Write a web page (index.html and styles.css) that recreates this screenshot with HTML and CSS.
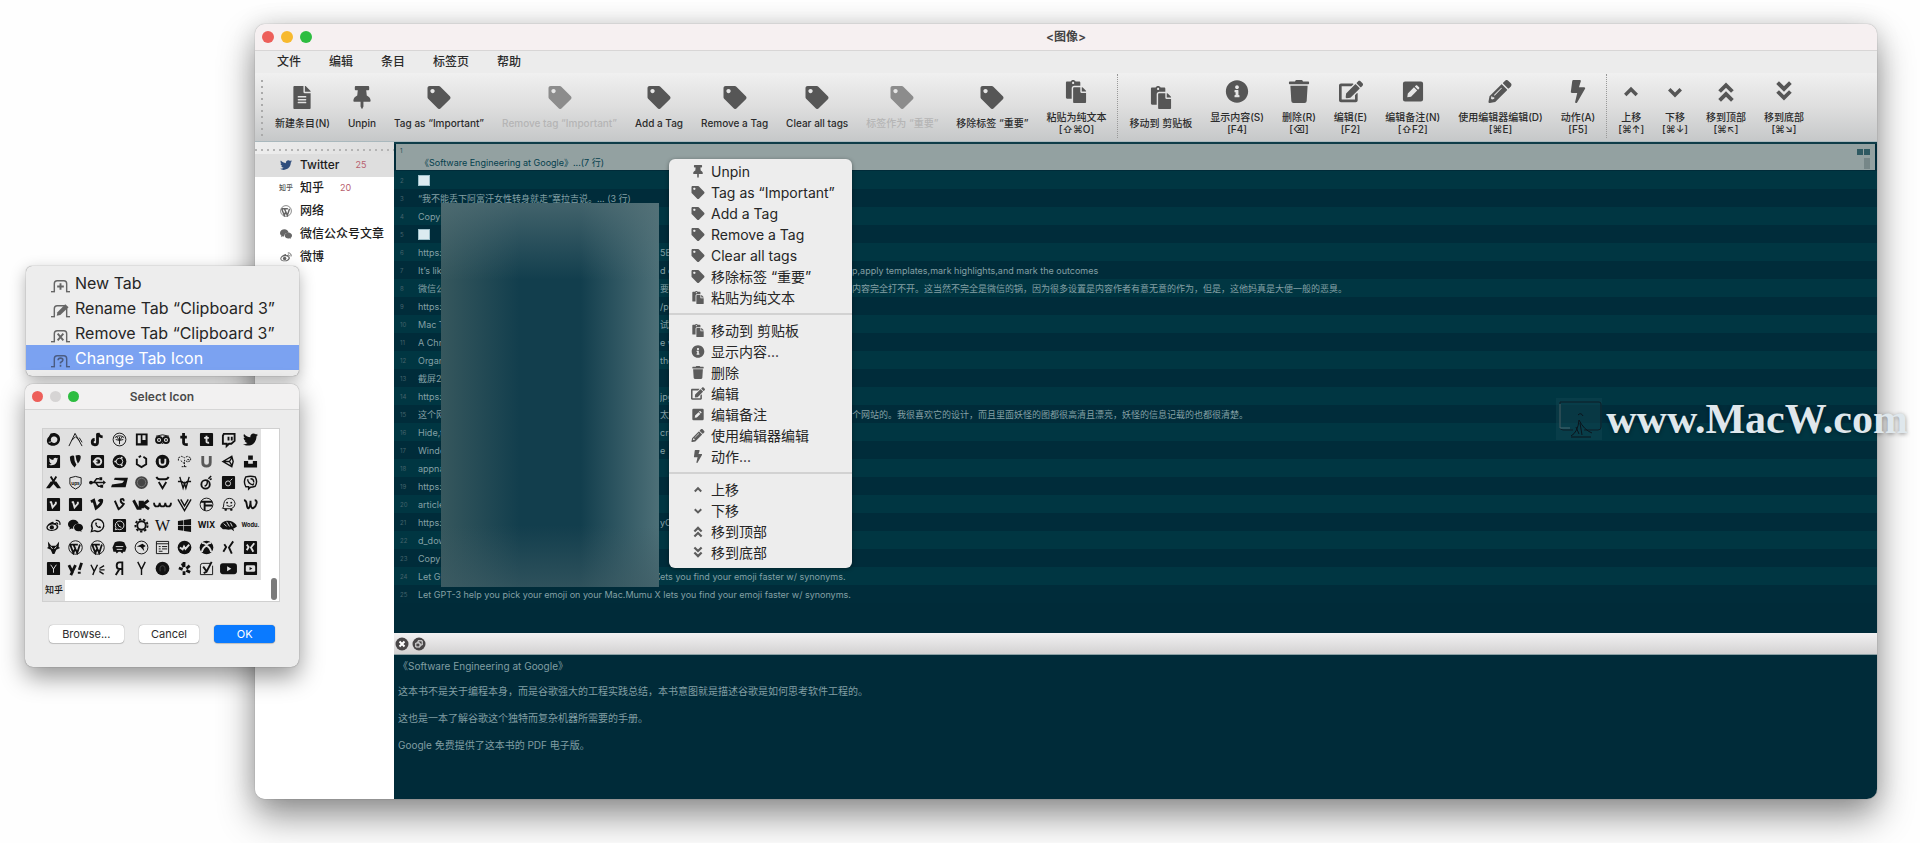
FILE: index.html
```html
<!DOCTYPE html>
<html lang="zh-CN">
<head>
<meta charset="utf-8">
<title>图像</title>
<link rel="stylesheet" href="styles.css">
</head>
<body>
<svg class="defs" aria-hidden="true">
  <symbol id="file" viewBox="0 0 384 512"><path d="M224 136V0H24C10.7 0 0 10.7 0 24v464c0 13.3 10.7 24 24 24h336c13.3 0 24-10.7 24-24V160H248c-13.2 0-24-10.8-24-24zm64 236c0 6.600-5.400 12-12 12H108c-6.600 0-12-5.400-12-12v-8c0-6.600 5.400-12 12-12h168c6.600 0 12 5.400 12 12v8zm0-64c0 6.600-5.400 12-12 12H108c-6.600 0-12-5.400-12-12v-8c0-6.600 5.400-12 12-12h168c6.600 0 12 5.400 12 12v8zm0-72v8c0 6.600-5.400 12-12 12H108c-6.600 0-12-5.400-12-12v-8c0-6.600 5.400-12 12-12h168c6.600 0 12 5.400 12 12zm96-114.100v6.100H256V0h6.100c6.400 0 12.500 2.500 17 7l97.900 98c4.500 4.500 7 10.600 7 16.900z"/></symbol>
  <symbol id="pin" viewBox="0 0 384 512"><path d="M298 214L286 96H328c13 0 24-11 24-24V24c0-13-11-24-24-24H56C43 0 32 11 32 24v48c0 13 11 24 24 24h42L86 214C37 237 0 277 0 328c0 13 11 24 24 24h136v104l25 52c3 6 11 6 14 0l25-52V352h136c13 0 24-11 24-24 0-51-38-91-86-114z"/></symbol>
  <symbol id="tag" viewBox="0 0 512 512"><path d="M0 252V48C0 21 21 0 48 0h204a48 48 0 0 1 34 14l212 212c19 19 19 49 0 68L294 498c-19 19-49 19-68 0L14 286A48 48 0 0 1 0 252zM112 64c-27 0-48 21-48 48s21 48 48 48 48-21 48-48-21-48-48-48z"/></symbol>
  <symbol id="paste" viewBox="0 0 448 512"><path d="M128 184c0-31 25-56 56-56h136V56c0-13-11-24-24-24h-81C204 13 184 0 160 0s-44 13-55 32H24C11 32 0 43 0 56v336c0 13 11 24 24 24h104V184zm32-144c13 0 24 11 24 24s-11 24-24 24-24-11-24-24 11-24 24-24zm184 248h104v200c0 13-11 24-24 24H184c-13 0-24-11-24-24V184c0-13 11-24 24-24h136v104c0 13 11 24 24 24zm104-38v6h-96v-96h6a24 24 0 0 1 17 7l66 66a24 24 0 0 1 7 17z"/></symbol>
  <symbol id="info" viewBox="0 0 512 512"><path d="M256 8C119 8 8 119 8 256c0 137 111 248 248 248s248-111 248-248C504 119 393 8 256 8zm0 110c23 0 42 19 42 42s-19 42-42 42-42-19-42-42 19-42 42-42zm56 254c0 7-5 12-12 12h-88c-7 0-12-5-12-12v-24c0-7 5-12 12-12h12v-64h-12c-7 0-12-5-12-12v-24c0-7 5-12 12-12h64c7 0 12 5 12 12v100h12c7 0 12 5 12 12v24z"/></symbol>
  <symbol id="trash" viewBox="0 0 448 512"><path d="M432 32H312l-9-19A24 24 0 0 0 281 0H167a24 24 0 0 0-22 13L136 32H16A16 16 0 0 0 0 48v32a16 16 0 0 0 16 16h416a16 16 0 0 0 16-16V48a16 16 0 0 0-16-16zM53 467a48 48 0 0 0 48 45h246a48 48 0 0 0 48-45L416 128H32z"/></symbol>
  <symbol id="edit" viewBox="0 0 576 512"><path d="M403 83l90 90c4 4 4 10 0 14L274 406l-92 10c-13 1-23-9-22-22l10-92L389 83c4-4 10-4 14 0zm162-23l-49-49c-15-15-40-15-55 0l-36 36c-4 4-4 10 0 14l90 90c4 4 10 4 14 0l36-36c15-15 15-40 0-55zM384 346V448H64V128h230c3 0 6-1 8-3l40-40c8-8 3-21-8-21H48C22 64 0 86 0 112v352c0 27 22 48 48 48h352c27 0 48-21 48-48V306c0-11-13-16-21-8l-40 40c-2 2-3 5-3 8z"/></symbol>
  <symbol id="note" viewBox="0 0 448 512"><path fill-rule="evenodd" d="M48 32h352a48 48 0 0 1 48 48v352a48 48 0 0 1-48 48H48a48 48 0 0 1-48-48V80a48 48 0 0 1 48-48zM246 163L109 300l-13 84 84-13 137-137zM265 144l71 71 23-23c9-9 9-20 0-29l-42-42c-9-9-20-9-29 0z"/></symbol>
  <symbol id="pencil" viewBox="0 0 512 512"><path fill-rule="evenodd" d="M498 142l-46 46c-5 5-12 5-17 0L324 77c-5-5-5-12 0-17l46-46c19-19 49-19 68 0l60 60c19 19 19 49 0 68zM284 100L22 362 0 484c-3 16 11 31 28 28l122-22 262-262c5-5 5-12 0-17L301 100c-5-5-12-5-17 0zM284 172l14 14-162 162-14-14zM84 384h44v36l-50 14-24-24 12-46h18z"/></symbol>
  <symbol id="bolt" viewBox="0 0 320 512"><path d="M296 160H181l42-130C227 15 216 0 200 0H56C44 0 34 9 32 21L0 261c-2 14 10 27 24 27h119L97 482c-4 16 8 30 23 30 8 0 16-4 21-12l176-304c9-16-2-36-21-36z"/></symbol>
  <symbol id="up" viewBox="-2 -2 20 20"><path d="M3 11l5-5 5 5" class="chev"/></symbol>
  <symbol id="down" viewBox="-2 -2 20 20"><path d="M3 6l5 5 5-5" class="chev"/></symbol>
  <symbol id="top" viewBox="-1 -1 18 18"><path d="M3 8l5-5 5 5M3 15l5-5 5 5" class="chev"/></symbol>
  <symbol id="bottom" viewBox="-1 -1 18 18"><path d="M3 1l5 5 5-5M3 8l5 5 5-5" class="chev"/></symbol>
  <symbol id="twitter" viewBox="0 0 512 512"><path d="M459 152c1 4 1 9 1 13 0 139-106 299-299 299-59 0-115-17-161-47 8 1 16 1 25 1 49 0 94-16 130-45-46-1-84-31-98-72 7 1 13 1 20 1 10 0 19-1 28-3-48-10-84-52-84-103v-1c14 7 30 12 47 13-28-19-47-51-47-88 0-19 6-37 15-53 51 64 129 105 216 110-2-8-2-16-2-24 0-58 46-105 105-105 30 0 57 13 76 33 24-4 47-13 67-25-8 24-24 45-46 58 21-3 41-8 60-17-14 21-32 40-53 55z"/></symbol>
  <symbol id="weibo" viewBox="0 0 16 16"><path fill-rule="evenodd" d="M6.500 4.200c1.300-.5 2 .2 1.600 1.500 1.700-.7 3.400-.4 3 1.200 3 .9 2.600 4.100-.2 5.700C7.600 14.700.6 14 .4 10.300.3 8 3.700 5 6.500 4.200zM6.500 7c-3.100.2-5 1.900-4.700 3.500.2 1.500 2.400 2.400 4.900 2.200 2.900-.3 4.900-1.900 4.700-3.500C11.200 7.700 9 6.800 6.500 7z"/><circle cx="6.200" cy="10" r="2.300"/><path d="M10.500 5.200c1.400-.3 2.200.6 1.800 1.900M10.400 2.600c2.900-.6 5.200 1.800 4.300 4.700" fill="none" stroke="currentColor" stroke-width="1.300"/></symbol>
  <symbol id="wechat" viewBox="0 0 16 16"><path d="M6 1.800C2.700 1.800 0 4 0 6.700c0 1.500.8 2.800 2 3.700l-.6 1.800 2.200-1.100c.7.200 1.500.3 2 .3-.5-3 2-5.400 5.800-5.200C11 3.600 8.800 1.800 6 1.800z"/><path d="M16 10c0-2.200-2.200-4-4.800-4-2.700 0-4.800 1.800-4.800 4s2.100 4.100 4.800 4.100c.5 0 1.100-.1 1.600-.3l1.700 1-.5-1.500C15.300 12.500 16 11.300 16 10z"/></symbol>
  <symbol id="wp" viewBox="0 0 16 16"><circle cx="8" cy="8" r="7.200" fill="none" stroke="currentColor"/><path d="M2.300 5l3.400 9L8 8M6 5.200l3.800 8.700 2.900-9M2 5h4.200M6 5h4.500" fill="none" stroke="currentColor" stroke-width="1.900"/></symbol>
  <symbol id="sq" viewBox="0 0 16 16"><rect x="1" y="1" width="14" height="14" rx="1"/></symbol>
  <symbol id="tab" viewBox="0 0 20 14"><path d="M0 13h3.500V4.500Q3.500 1.500 6.500 1.500h7q3 0 3 3V13H20" fill="none" stroke="currentColor" stroke-width="1.500"/></symbol>
</svg>

<main class="window">
  <header class="titlebar">
    <div class="lights"><i class="red"></i><i class="yellow"></i><i class="green"></i></div>
    <h1>&lt;图像&gt;</h1>
  </header>
  <nav class="menubar"><button>文件</button><button>编辑</button><button>条目</button><button>标签页</button><button>帮助</button></nav>
  <div class="toolbar">
    <i class="grip"></i>
    <button><svg><use href="#file"/></svg><span>新建条目(N)</span></button>
    <button><svg><use href="#pin"/></svg><span>Unpin</span></button>
    <button><svg><use href="#tag"/></svg><span>Tag as “Important”</span></button>
    <button disabled><svg><use href="#tag"/></svg><span>Remove tag “Important”</span></button>
    <button><svg><use href="#tag"/></svg><span>Add a Tag</span></button>
    <button><svg><use href="#tag"/></svg><span>Remove a Tag</span></button>
    <button><svg><use href="#tag"/></svg><span>Clear all tags</span></button>
    <button disabled><svg><use href="#tag"/></svg><span>标签作为 “重要”</span></button>
    <button><svg><use href="#tag"/></svg><span>移除标签 “重要”</span></button>
    <button><svg><use href="#paste"/></svg><span>粘贴为纯文本<br>[⇧⌘O]</span></button>
    <i class="rule"></i>
    <button><svg><use href="#paste"/></svg><span>移动到 剪贴板</span></button>
    <button><svg><use href="#info"/></svg><span>显示内容(S)<br>[F4]</span></button>
    <button><svg><use href="#trash"/></svg><span>删除(R)<br>[⌫]</span></button>
    <button><svg><use href="#edit"/></svg><span>编辑(E)<br>[F2]</span></button>
    <button><svg><use href="#note"/></svg><span>编辑备注(N)<br>[⇧F2]</span></button>
    <button><svg><use href="#pencil"/></svg><span>使用编辑器编辑(D)<br>[⌘E]</span></button>
    <button><svg><use href="#bolt"/></svg><span>动作(A)<br>[F5]</span></button>
    <i class="rule"></i>
    <button><svg><use href="#up"/></svg><span>上移<br>[⌘↑]</span></button>
    <button><svg><use href="#down"/></svg><span>下移<br>[⌘↓]</span></button>
    <button><svg><use href="#top"/></svg><span>移到顶部<br>[⌘↖]</span></button>
    <button><svg><use href="#bottom"/></svg><span>移到底部<br>[⌘↘]</span></button>
  </div>

  <div class="body">
    <aside class="sidebar">
      <i class="handle"></i>
      <ul>
        <li class="on"><svg class="blue"><use href="#twitter"/></svg><span>Twitter</span><b>25</b></li>
        <li><em>知乎</em><span>知乎</span><b>20</b></li>
        <li><svg><use href="#wp"/></svg><span>网络</span></li>
        <li><svg><use href="#wechat"/></svg><span>微信公众号文章</span></li>
        <li><svg><use href="#weibo"/></svg><span>微博</span></li>
      </ul>
    </aside>
    <div class="content">
      <ol class="clips">
        <li class="current"><small>1</small><p>《Software Engineering at Google》...(7 行)</p><span class="marks"><i></i><i></i></span><span class="thumb"></span></li>
        <li><small>2</small><i class="pic"></i></li>
        <li><small>3</small><p>“我不能丢下阿富汗女性转身就走”塞拉吉说。... (3 行)</p></li>
        <li><small>4</small><p>Copy</p></li>
        <li><small>5</small><i class="pic"></i></li>
        <li><small>6</small><p class="head">https:</p><p class="mid">5BI</p></li>
        <li><small>7</small><p class="head">It’s like</p><p class="mid">d of</p><p>p,apply templates,mark highlights,and mark the outcomes</p></li>
        <li><small>8</small><p class="head">微信公众</p><p class="mid">要么</p><p>内容完全打不开。这当然不完全是微信的锅，因为很多设置是内容作者有意无意的作为，但是，这他妈真是大便一般的恶臭。</p></li>
        <li><small>9</small><p class="head">https:</p><p class="mid">/pl</p></li>
        <li><small>10</small><p class="head">Mac T</p><p class="mid">试用</p></li>
        <li><small>11</small><p class="head">A Chro</p><p class="mid">e w</p></li>
        <li><small>12</small><p class="head">Organ</p><p class="mid">the</p></li>
        <li><small>13</small><p class="head">截屏20</p></li>
        <li><small>14</small><p class="head">https:</p><p class="mid">jpg</p></li>
        <li><small>15</small><p class="head">这个网</p><p class="mid">太多</p><p>个网站的。我很喜欢它的设计，而且里面妖怪的图都很高清且漂亮，妖怪的信息记载的也都很清楚。</p></li>
        <li><small>16</small><p class="head">Hide,t</p><p class="mid">cre</p></li>
        <li><small>17</small><p class="head">Windo</p><p class="mid">e</p></li>
        <li><small>18</small><p class="head">appna</p></li>
        <li><small>19</small><p class="head">https:</p></li>
        <li><small>20</small><p class="head">article</p></li>
        <li><small>21</small><p class="head">https:</p><p class="mid">yC</p></li>
        <li><small>22</small><p class="head">d_dow</p></li>
        <li><small>23</small><p class="head">Copy</p></li>
        <li><small>24</small><p class="head">Let GPT-3 help you pick your emoji on your Mac.Mumu X</p><p>ets you find your emoji faster w/ synonyms.</p></li>
        <li><small>25</small><p>Let GPT-3 help you pick your emoji on your Mac.Mumu X lets you find your emoji faster w/ synonyms.</p></li>
      </ol>
      <div class="dockbar">
        <button aria-label="关闭"><svg viewBox="0 0 14 14"><circle cx="7" cy="7" r="6.500"/><path d="M4.500 4.500l5 5m0-5l-5 5" stroke="#fff" stroke-width="2"/></svg></button>
        <button aria-label="浮动"><svg viewBox="0 0 14 14"><circle cx="7" cy="7" r="6.500"/><path d="M6 6V3.800h4.200V8H8M3.800 6H8v4H3.800z" fill="none" stroke="#eee"/></svg></button>
      </div>
      <section class="preview">
        <p>《Software Engineering at Google》</p>
        <p>这本书不是关于编程本身，而是谷歌强大的工程实践总结，本书意图就是描述谷歌是如何思考软件工程的。</p>
        <p>这也是一本了解谷歌这个独特而复杂机器所需要的手册。</p>
        <p>Google 免费提供了这本书的 PDF 电子版。</p>
      </section>
      <div class="blur"></div>
    </div>
  </div>
</main>

<div class="popup context">
  <button><svg><use href="#pin"/></svg>Unpin</button>
  <button><svg><use href="#tag"/></svg>Tag as “Important”</button>
  <button><svg><use href="#tag"/></svg>Add a Tag</button>
  <button><svg><use href="#tag"/></svg>Remove a Tag</button>
  <button><svg><use href="#tag"/></svg>Clear all tags</button>
  <button><svg><use href="#tag"/></svg>移除标签 “重要”</button>
  <button><svg><use href="#paste"/></svg>粘贴为纯文本</button>
  <hr>
  <button><svg><use href="#paste"/></svg>移动到 剪贴板</button>
  <button><svg><use href="#info"/></svg>显示内容...</button>
  <button><svg><use href="#trash"/></svg>删除</button>
  <button><svg><use href="#edit"/></svg>编辑</button>
  <button><svg><use href="#note"/></svg>编辑备注</button>
  <button><svg><use href="#pencil"/></svg>使用编辑器编辑</button>
  <button><svg><use href="#bolt"/></svg>动作...</button>
  <hr>
  <button><svg><use href="#up"/></svg>上移</button>
  <button><svg><use href="#down"/></svg>下移</button>
  <button><svg><use href="#top"/></svg>移到顶部</button>
  <button><svg><use href="#bottom"/></svg>移到底部</button>
</div>

<div class="popup tabmenu">
  <button><svg viewBox="0 0 20 14"><use href="#tab"/><path d="M10 4v7M6.500 7.500h7" stroke="currentColor" stroke-width="2"/></svg>New Tab</button>
  <button><svg viewBox="0 0 20 14"><use href="#tab"/><path d="M6 12l.8-3.800L15 0l3.500 3-8.700 8.300z"/></svg>Rename Tab “Clipboard 3”</button>
  <button><svg viewBox="0 0 20 14"><use href="#tab"/><path d="M7 4.500l6 7m0-7l-6 7" stroke="currentColor" stroke-width="2"/></svg>Remove Tab “Clipboard 3”</button>
  <button class="hot"><svg viewBox="0 0 20 14"><use href="#tab"/><path d="M7.500 6.200Q7.500 4 10 4t2.500 2Q12.500 7.500 10 8.500v1M10 11v2" fill="none" stroke="currentColor" stroke-width="1.700"/></svg>Change Tab Icon</button>
</div>

<section class="dialog">
  <header><div class="lights"><i class="red"></i><i class="off"></i><i class="green"></i></div><h2>Select Icon</h2></header>
  <div class="picker">
    <ul class="icons">
      <li><svg viewBox="0 0 16 16"><path fill-rule="evenodd" d="M5 1.500c5-1.800 10 1 10 6 0 4.500-3.500 7.200-7.500 7.200C3 14.700.5 12 1 8.500 1.500 6 3 5 3 5zM7 5a3.500 3.500 0 1 0 5 4c1-3-2-5-5-4z"/><path d="M3 11c3 0 5-2 4-5l3 2" fill="none" stroke="#e0e0e0"/></svg></li>
      <li><svg viewBox="0 0 16 16"><path d="M1 15L7.500 1.500 15 15M4 9l4-4 4 4M12 6l3 5" class="ln"/></svg></li>
      <li><svg viewBox="0 0 16 16"><path d="M8 1.500v9.300a2.800 2.800 0 1 1-3-2.800M8.700 1c.3 2.500 2 4 4.800 4.200" class="thick"/></svg></li>
      <li><svg viewBox="0 0 16 16"><circle cx="8" cy="8" r="6.800" class="ln"/><path d="M3 6q5-4 10 0M8 5v8M4 8l4 1 4-1M5 5l3 4 3-4" class="ln"/></svg></li>
      <li><svg viewBox="0 0 16 16"><path fill-rule="evenodd" d="M2 1.500h12.500v13H2zM4 3.500v8.500h3.200V3.500zm5 0v5h3.300v-5z"/></svg></li>
      <li><svg viewBox="0 0 16 16"><circle cx="4.300" cy="8.500" r="3.200" class="thick2"/><circle cx="11.700" cy="8.500" r="3.200" class="thick2"/><circle cx="4.300" cy="8.500" r="1"/><circle cx="11.700" cy="8.500" r="1"/><path d="M1 4.500q7-3 14 0M7 11l1 1.500L9 11" class="ln"/></svg></li>
      <li><svg viewBox="0 0 16 16"><path d="M7 1v10.500q0 2.300 4.500 1.800M3.500 5.500h7" class="fat"/></svg></li>
      <li><svg viewBox="0 0 16 16"><use href="#sq"/><path d="M8 4v6q0 1.800 2.800 1.300M5.500 6.300h5" class="cut2"/></svg></li>
      <li><svg viewBox="0 0 16 16"><path d="M3 2h11.500v7.500L11 12.500H8.500L6 15v-2.500H2V4z" class="thick2"/><path d="M8 5v4M11.500 5v4" class="thick2"/></svg></li>
      <li><svg><use href="#twitter"/></svg></li>

      <li><svg viewBox="0 0 16 16"><use href="#sq"/><svg x="3" y="3" width="10" height="10" class="inv"><use href="#twitter"/></svg></svg></li>
      <li><svg viewBox="0 0 16 16"><path d="M2 3q3-2 4.500-1Q6.500 8 9 11.500l-2 3Q2 10 2 3zm6-1.500q4.500-1 5.500.5Q14 6 10.500 10 8.500 6 8 1.500z"/></svg></li>
      <li><svg viewBox="0 0 16 16"><use href="#sq"/><circle cx="8.500" cy="8" r="3.500" class="cut2"/><path d="M3 8h5" class="cut2"/></svg></li>
      <li><svg viewBox="0 0 16 16"><circle cx="8" cy="8" r="7.300"/><circle cx="8" cy="8" r="3.500" class="cut"/><circle cx="3.500" cy="8" r="1.100" class="inv"/><circle cx="10.300" cy="4" r="1.100" class="inv"/><circle cx="10.300" cy="12" r="1.100" class="inv"/></svg></li>
      <li><svg viewBox="0 0 16 16"><path d="M3 5v6l5 3 5-3V5l-3-2M7.500 2L5 3.500" class="thick2"/></svg></li>
      <li><svg viewBox="0 0 16 16"><circle cx="8" cy="8" r="7.300"/><path d="M5 5v3.500q0 3 3 3t3-3V5" class="cut2"/></svg></li>
      <li><svg viewBox="0 0 16 16"><path d="M1.500 7V4L5 2.500 8 4l3-1.500L14.500 4v3l-3 1.500L8 6.500v8M4 7l4 3.500M5 13.500h6M11 6h3" class="ln" stroke-dasharray="2 1"/></svg></li>
      <li><svg viewBox="0 0 16 16"><path d="M4 2v7q0 4 4 4t4-4V2" class="fat" opacity=".65"/></svg></li>
      <li><svg viewBox="0 0 16 16"><path d="M2 8l9.500-5.500L13 8l-1.500 5.500zM2 8h7M9 8l3-5M9 8l3 5" class="mid1"/></svg></li>
      <li><svg viewBox="0 0 16 16"><path d="M5.500 1.500h5V6h-5zM1 7.500h4.500v3h5v-3H15v7H1z"/></svg></li>

      <li><svg viewBox="0 0 16 16"><path d="M0 14L5 7h2l1 2 1-2h2l5 7h-4L8 9.500 4 14z"/><path d="M5 1.500L9.500 9M11 1.500L6.500 9" class="thick2"/></svg></li>
      <li><svg viewBox="0 0 16 16"><path d="M2 3q6-3 12 0v6.500Q13 13 8 15q-5-2-6-5.500z" class="ln"/><text x="8" y="10.500" class="t5">ups</text></svg></li>
      <li><svg viewBox="0 0 16 16"><path d="M0 8h15M4 8l3-4h3M6 8l3 4h3" class="mid1"/><circle cx="1" cy="8" r="2"/><path d="M14 5.500l3 2.500-3 2.500zM10 2.500h3v3h-3zM11 10.500h3v3h-3z"/></svg></li>
      <li><svg viewBox="0 0 16 16"><path d="M3 3h14l-2.500 10H-1l1-3 11-1.500L13 6 2 5z"/></svg></li>
      <li><svg viewBox="0 0 16 16"><circle cx="8" cy="8" r="6.800" opacity=".75"/><circle cx="8" cy="8" r="4.500" fill="none" stroke="#777"/></svg></li>
      <li><svg viewBox="0 0 16 16"><path d="M1.500 2q1 2.500 3.500 2.500h6q2.500 0 3.500-2.500M4 7.500l4 6.500 4-6.500" class="thick2"/></svg></li>
      <li><svg viewBox="0 0 16 16"><path d="M3 2l3.500 12L8 9l1.500 5L13 2M1 7h4l3 2 3-2h4" class="mid1"/></svg></li>
      <li><svg viewBox="0 0 16 16"><circle cx="7" cy="10" r="4.500" class="thick2"/><path d="M6 12q4-2 2.500-7M10 4l3-3M11.500 5l2-1" class="mid1"/></svg></li>
      <li><svg viewBox="0 0 16 16"><use href="#sq"/><circle cx="7.500" cy="9" r="2.700" class="cut"/><path d="M10 6l2-2" class="cut"/></svg></li>
      <li><svg viewBox="0 0 16 16"><path d="M3 2q5-1.500 10 0 3 5 0 10-2.500 1-5 1l-2 2v-2.500H3Q0 7 3 2z" class="mid1"/><path d="M5 4.500Q5 9 10.500 10.500L11.500 9M8 4q3.500 0 3.500 4" class="mid1"/></svg></li>

      <li><svg viewBox="0 0 16 16"><use href="#sq"/><path d="M4 5.500h1.500L7 11l3.500-4V5" class="cut2"/></svg></li>
      <li><svg viewBox="0 0 16 16"><use href="#sq"/><path d="M4 5.500h1.500L7 11l3.500-4V5" class="cut2"/></svg></li>
      <li><svg viewBox="0 0 16 16"><path d="M1 5l3-1.500L6.500 12Q13 7 12.500 3.500q-2-.5-3 1.500" class="fat"/></svg></li>
      <li><svg viewBox="0 0 16 16"><path d="M3 4l4 9q4-2.500 5.500-5.500-4-1-3-5 3-1.500 3 2" class="thick2"/></svg></li>
      <li><svg viewBox="0 0 16 16"><path d="M-.5 3.500L4 12h2.500V4M15.500 3.500L9.500 8l6.500 5M9 4v8" class="fat"/></svg></li>
      <li><svg viewBox="0 0 16 16"><path d="M-1 6q0 4 3 4t3-4q0 4 3 4t3-4q0 4 3 4t3-4" class="thick2"/></svg></li>
      <li><svg viewBox="0 0 16 16"><path d="M1 2.500l7 12 7-12M4 2.500l4 7 4-7" class="mid1"/></svg></li>
      <li><svg viewBox="0 0 16 16"><circle cx="8" cy="8" r="6.800" class="ln"/><path d="M2 5h12M6 5v9M6 9h8" class="thick2"/></svg></li>
      <li><svg viewBox="0 0 16 16"><path d="M1.500 12Q3 12 3 7q1-5.500 6-5.500t6 5.500q0 4-4 5.500H4.500z" class="ln"/><circle cx="6.500" cy="6" r="1"/><circle cx="11" cy="6" r="1"/><path d="M6 9q3 2 6 0" class="ln"/><circle cx="5" cy="13.500" r="1.300"/><circle cx="11" cy="13.500" r="1.300"/></svg></li>
      <li><svg viewBox="0 0 16 16"><path d="M1 3.500q2.500 0 3 4.500T6 12q2-2 2-8 0 8 2.500 8 3-1 4-5.500.5-3-2-3" class="thick2"/></svg></li>

      <li><svg><use href="#weibo"/></svg></li>
      <li><svg><use href="#wechat"/></svg></li>
      <li><svg viewBox="0 0 16 16"><path d="M1.500 14.500l1-3.500a6.500 6.500 0 1 1 2.500 2.500z" class="mid1"/><path d="M5.500 5q0 5 5.500 6l1-1.500-2-1-1 .8L6.800 7l.7-1-.8-1.500z"/></svg></li>
      <li><svg viewBox="0 0 16 16"><use href="#sq"/><path d="M3.500 12.500l.7-2.300a4.600 4.600 0 1 1 1.800 1.700z" class="cut"/><path d="M6 6q.5 3.500 4 4" class="cut"/></svg></li>
      <li><svg viewBox="0 0 16 16"><circle cx="8" cy="8" r="4.500" class="thick2"/><circle cx="8" cy="8" r="6.500" fill="none" stroke="currentColor" stroke-width="2" stroke-dasharray="2.500 2"/></svg></li>
      <li><svg viewBox="0 0 16 16"><text x="8" y="13.500" class="serif">W</text></svg></li>
      <li><svg viewBox="0 0 16 16"><path d="M1 3.200l5.800-.9v5.200H1zM7.500 2.200L15 1v6.500H7.500zM1 8.300h5.800v5.300L1 12.800zM7.500 8.300H15V15l-7.500-1.200z"/></svg></li>
      <li><svg viewBox="0 0 16 16"><text x="8" y="11" class="t8">WIX</text></svg></li>
      <li><svg viewBox="0 0 16 16"><path d="M-1 9q1-5 7-6 6-1 10 4l1 2q-4 3-4 2l1 3-3-2q-3 1-6 0H2z"/><path d="M3 6l3 3m0-5l3 5m1-4l2 4" class="cut"/></svg></li>
      <li><svg viewBox="0 0 16 16"><text x="8" y="10" class="t6">Wodu.</text></svg></li>

      <li><svg viewBox="0 0 16 16"><path d="M2 1.500L5.500 6h5L14 1.500l-.5 6 1.500 1-4 2-2 4.500H7l-2-4.500-4-2 1.500-1z"/><path d="M5 7l2 2.500M11 7L9 9.500" class="cut"/></svg></li>
      <li><svg><use href="#wp"/></svg></li>
      <li><svg><use href="#wp"/></svg></li>
      <li><svg viewBox="0 0 16 16"><path d="M3 2.500Q8 0 13 2.500L15.500 8 14 12.500h-2l-1 2-2-2H7l-2 2-1-2H1.500L.5 8z"/><path d="M4 7h8M5 10h6" class="cut"/></svg></li>
      <li><svg viewBox="0 0 16 16"><circle cx="8" cy="8" r="6.800" class="ln"/><path d="M3 7l6-3 3.500 2.500L10 8l1 4-4-4.500z"/></svg></li>
      <li><svg viewBox="0 0 16 16"><path d="M1.500 1.500h13v13h-13zM1.500 4h13M4 7h2m1.500 0H13M4 9.500h2m1.500 0H13M4 12h4" class="ln"/></svg></li>
      <li><svg viewBox="0 0 16 16"><circle cx="8" cy="8" r="7.300"/><path d="M3 8l3 2 1.500-3L9 9.500 13 5" class="cut2"/></svg></li>
      <li><svg viewBox="0 0 16 16"><circle cx="8" cy="8" r="7.300"/><path d="M3 13q1-5 5-7 4 2 5 7M3 3q3 0 5 2 2-2 5-2" class="cut2"/></svg></li>
      <li><svg viewBox="0 0 16 16"><path d="M3.500 4.500l2 3-3 5M13 1.500L8.500 8l3 6.500" class="thick2"/></svg></li>
      <li><svg viewBox="0 0 16 16"><use href="#sq"/><path d="M4 5l2 2.500L4 11M12 3.500L8.500 8l2.500 4.500" class="cut2"/></svg></li>

      <li><svg viewBox="0 0 16 16"><use href="#sq"/><path d="M5 4l3 4.500L11 4M8 8v4.500" class="cut"/></svg></li>
      <li><svg viewBox="0 0 16 16"><path d="M1 4.500l3.500 7L8 4.500M5 11l-2 4M12 11.500v2M12 9.500L14.500 2" class="fat"/></svg></li>
      <li><svg viewBox="0 0 16 16"><path d="M1 4l3.500 7L8 4M4.500 11L3 15M10 8l5-3M10 9.500h5.500M10 11l4.500 3" class="mid1"/></svg></li>
      <li><svg viewBox="0 0 16 16"><path d="M11 15V1.500H8Q5 1.500 5 5t3 3.500h3M8 8.500L4 15" class="thick2"/></svg></li>
      <li><svg viewBox="0 0 16 16"><path d="M4 1l4 8 4-8M8 9v6" class="mid1"/></svg></li>
      <li><svg viewBox="0 0 16 16"><circle cx="8" cy="8" r="7.300"/><path d="M5.500 11q-1-6 2.500-6t2.500 6" fill="none" stroke="#444"/></svg></li>
      <li><svg viewBox="0 0 16 16"><path d="M7.500 1v5.500M2 7.500l4 1.500M7.500 11v4M10 10l4 2M10 8l3.500-3M5.500 2.500l2 4" class="fat"/></svg></li>
      <li><svg viewBox="0 0 16 16"><path d="M12.500 2.500H4q-2.500 0-2.500 2.500v9.500h13V5" class="ln"/><path d="M4.500 6L8 11M13.500 1L8 11.500 5 13" class="thick2"/></svg></li>
      <li><svg viewBox="0 0 16 16"><rect x="-1" y="2.500" width="18" height="11.500" rx="3"/><path d="M6.500 5.500l4.500 2.700-4.500 2.700z" class="inv"/></svg></li>
      <li><svg viewBox="0 0 16 16"><use href="#sq"/><rect x="3" y="4.500" width="10" height="7" rx="1.500" class="inv"/><path d="M7 6.300L10 8l-3 1.800z"/></svg></li>
      <li class="zh">知乎</li>
    </ul>
    <i class="knob"></i>
  </div>
  <footer><button>Browse...</button><button>Cancel</button><button class="ok">OK</button></footer>
</section>

<div class="watermark">
  <svg viewBox="0 0 48 44"><rect x="1" y="1" width="46" height="42" fill="#124651" opacity=".45"/><path d="M5 5h39q2 0 2 2v23q0 3-3 3H29M5 5v25q0 3 3 3h10" fill="none" stroke="#0c1d27"/><path d="M5 7v24h10" fill="none" stroke="#466a72"/><path d="M23 18q3-3 5 1M16 39q7-4 8-16 5 10 13 13M16 40h20M21 30l3 7M25 26l2 12" fill="none" stroke="#0a141c"/></svg>
  <span>www.MacW.com</span>
</div>
</body>
</html>
```
FILE: styles.css
```css
* { box-sizing: border-box; }
body {
  margin: 0;
  min-height: 100vh;
  padding: 24px 43px 44px 255px;
  display: flex;
  position: relative;
  overflow: hidden;
  background: #fefefe;
  font-family: Inter, "Noto Sans CJK SC", sans-serif;
  color: #2b2b2b;
}
ul, ol, p, h1, h2 { margin: 0; padding: 0; list-style: none; }
button { font: inherit; color: inherit; border: 0; padding: 0; background: none; }
svg { display: block; fill: currentColor; overflow: visible; }
.defs { position: absolute; width: 0; height: 0; }
.chev { fill: none; stroke: currentColor; stroke-width: 3; }

.window {
  flex: 1;
  min-width: 0;
  display: flex;
  flex-direction: column;
  border-radius: 10px;
  background: #ececec;
  box-shadow: 0 0 1px rgba(0,0,0,.5), 0 18px 36px rgba(0,0,0,.42), 0 0 24px rgba(0,0,0,.12);
}
.titlebar {
  height: 27px;
  display: flex;
  align-items: center;
  position: relative;
  background: #f6f0f1;
  border-bottom: 1px solid #d8d6d6;
  border-radius: 10px 10px 0 0;
}
.titlebar h1 { flex: 1; text-align: center; font-size: 12px; line-height: 16px; font-weight: 600; color: #444; }
.lights { display: flex; gap: 7px; position: absolute; left: 7px; }
.lights i { width: 12px; height: 12px; border-radius: 50%; }
.red { background: #ed5f5a; }
.yellow { background: #f7b92f; }
.green { background: #2dbd41; }
.off { background: #d6d4d4; }

.menubar { height: 22px; padding-left: 22px; display: flex; gap: 28px; align-items: center; font-size: 12px; line-height: 18px; font-weight: 500; }

.toolbar {
  height: 69px;
  display: flex;
  align-items: stretch;
  padding: 1px 0 3px;
  background: linear-gradient(#f0f0f0, #dedede 50%, #c6c8c9);
  border-bottom: 1px solid #a9b8bd;
  font-size: 10px;
  line-height: 12px;
  white-space: nowrap;
  font-weight: 500;
}
.toolbar button { padding: 2px 9px 0; display: flex; flex-direction: column; align-items: center; justify-content: center; gap: 8px; }
.toolbar svg { width: 24px; height: 23px; color: #565656; }
.toolbar button:disabled { color: #b5b5b5; }
.toolbar button:disabled svg { color: #8c8c8c; }
.grip { width: 4px; margin: 4px 2px 2px 5px; background: radial-gradient(circle, #aaa 1px, transparent 1px) 0 0 / 4px 6px; }
.rule { width: 1px; margin: 0 2px; border-left: 1px dotted #999; }

.body { flex: 1; display: flex; min-height: 0; border-radius: 0 0 10px 10px; overflow: hidden; }
.sidebar { width: 139px; flex: none; background: #fff; }
.handle { display: block; height: 12px; background: radial-gradient(circle, #b4b4b4 1px, transparent 1px) 4px 3px / 6px 10px, linear-gradient(90deg, #eee, #dcdcdc); }
.sidebar li { height: 23px; display: flex; align-items: center; padding-left: 25px; font-size: 12px; line-height: 16px; padding-bottom: 2px; font-weight: 500; color: #1c1c1c; white-space: nowrap; }
.sidebar .on { background: #dedede; }
.sidebar svg { width: 12px; height: 12px; margin-right: 8px; color: #666; }
.sidebar .blue { color: #2f4d7c; }
.sidebar em { width: 20px; margin-left: -1px; margin-right: 1px; font-size: 7px; font-style: normal; color: #555; }
.sidebar b { margin-left: 16px; font-size: 9px; font-weight: 400; color: #b8606e; }

.content { flex: 1; min-width: 0; display: flex; flex-direction: column; position: relative; background: #002b39; }
.clips { flex: 1; border-top: 2px solid #0e3c48; font-size: 9px; color: #84a0a5; }
.clips li { height: 18px; display: flex; align-items: center; white-space: nowrap; background: #002c3a; }
.clips li:nth-child(even) { background: #003642; }
.clips small { width: 18px; margin-left: 6px; font-size: 6px; color: #45636c; flex: none; }
.clips .current { height: 26px; margin: 0 2px 1px; padding-left: 2px; position: relative; align-items: flex-end; background: #93a1a1; color: #04404d; }
.clips .current small { position: absolute; left: 4px; top: 3px; margin: 0; color: #1f4a54; }
.clips .current p { margin: 0 0 1px 22px; line-height: 12px; }
.clips .head { width: 242px; flex: none; overflow: hidden; }
.clips .mid { width: 192px; flex: none; overflow: hidden; }
.pic { width: 12px; height: 11px; background: #dcebf0; border: 1px solid #9fc0ca; }
.marks { position: absolute; right: 5px; top: 5px; display: flex; gap: 1px; }
.marks i { width: 6px; height: 6px; background: #2f5a62; }
.thumb { position: absolute; right: 5px; top: 14px; width: 6px; height: 11px; background: #768788; }

.dockbar { height: 22px; display: flex; align-items: center; gap: 3px; padding-left: 1px; background: linear-gradient(#f2f1f2, #d3d2d2); border-bottom: 1px solid #8ba0a4; color: #4a4748; }
.dockbar svg { width: 14px; height: 14px; }
.preview { height: 144px; padding: 0 4px; font-size: 10px; line-height: 27px; color: #819ea3; overflow: hidden; }
.preview p:first-child { line-height: 23px; }
.blur {
  position: absolute; left: 47px; top: 61px; width: 218px; height: 384px;
  background:
    linear-gradient(180deg, rgba(86,114,120,.7), transparent 20%),
    linear-gradient(0deg, rgba(62,92,100,.65), transparent 16%),
    linear-gradient(90deg, rgba(70,98,100,.7), transparent 36%),
    linear-gradient(270deg, rgba(92,124,130,.8), transparent 36%),
    #123e4d;
}

.popup { position: absolute; display: flex; flex-direction: column; background: #ededed; border-radius: 6px; color: #262626; }
.popup button { display: flex; align-items: center; text-align: left; white-space: nowrap; }
.context { left: 669px; top: 159px; width: 183px; padding: 2px 0 5px; font-size: 14px; line-height: 21px; box-shadow: 0 1px 4px rgba(0,0,0,.4); }
.context button { height: 21px; padding-left: 22px; gap: 6px; }
.context svg { width: 14px; height: 13px; color: #5c5c5c; }
.context hr { width: 100%; border: 0; height: 2px; margin: 5px 0; background: #d2d2d2; }
.tabmenu { left: 26px; top: 266px; width: 273px; padding: 4px 0 6px; font-size: 16px; box-shadow: 0 0 1px rgba(0,0,0,.6), 0 5px 16px rgba(0,0,0,.3); }
.tabmenu button { height: 25px; line-height: 24px; padding-left: 25px; gap: 5px; }
.tabmenu svg { width: 19px; height: 14px; margin-top: 6px; color: #666; }
.tabmenu .hot { background: #7ba2f1; color: #fff; }
.tabmenu .hot svg { color: #4b5c82; }

.dialog { position: absolute; left: 25px; top: 384px; width: 274px; padding-bottom: 24px; border-radius: 8px; background: #ececec; box-shadow: 0 0 1px rgba(0,0,0,.6), 0 10px 24px rgba(0,0,0,.42); }
.dialog header { height: 26px; display: flex; align-items: center; border-bottom: 1px solid #d6d6d6; background: #f2f1f1; border-radius: 8px 8px 0 0; position: relative; }
.dialog h2 { flex: 1; text-align: center; font-size: 12px; font-weight: 600; color: #4a4a4a; }
.dialog .lights i { width: 11px; height: 11px; }
.picker { margin: 18px 19px 0 17px; height: 174px; background: #fff; border: 1px solid #d0d0d0; position: relative; overflow: hidden; }
.icons { width: 218px; height: 100%; display: grid; grid-template-columns: repeat(10, 1fr); grid-template-rows: repeat(8, 1fr); }
.icons li { display: flex; align-items: center; justify-content: center; background: #e0e0e0; color: #111; min-width: 0; min-height: 0; }
.icons li > svg { width: 15px; height: 15px; }
.icons .zh { font-size: 9px; line-height: 12px; font-weight: 500; white-space: nowrap; }
.ln { fill: none; stroke: currentColor; stroke-width: 1; }
.mid1 { fill: none; stroke: currentColor; stroke-width: 1.5; }
.thick { fill: none; stroke: currentColor; stroke-width: 3; }
.thick2 { fill: none; stroke: currentColor; stroke-width: 2; }
.fat { fill: none; stroke: currentColor; stroke-width: 3; }
.cut { fill: none; stroke: #e0e0e0; stroke-width: 1; }
.cut2 { fill: none; stroke: #e0e0e0; stroke-width: 2; }
.inv { fill: #e0e0e0; color: #e0e0e0; }
.icons text { text-anchor: middle; font-weight: 700; }
.t5 { font-size: 5px; }
.t6 { font-size: 6px; }
.t8 { font-size: 9px; }
.icons .serif { font-family: "Liberation Serif", serif; font-size: 17px; font-weight: 400; }
.knob { position: absolute; right: 2px; top: 149px; width: 6px; height: 22px; border-radius: 3px; background: #7b7b7b; }
.dialog footer { display: flex; gap: 15px; padding: 23px 24px 0; font-size: 11px; line-height: 18px; }
.dialog footer button { height: 18px; flex: 61; background: #fff; border-radius: 4px; box-shadow: 0 0 1px rgba(0,0,0,.5), 0 1px 1px rgba(0,0,0,.15); }
.dialog footer button:first-child { flex: 75; }
.dialog footer .ok { background: #0a7aff; color: #fff; }

.watermark { position: absolute; right: 12px; top: 396px; display: flex; align-items: center; gap: 3px; font: bold 42px/46px "Liberation Serif", serif; color: #dfe7ec; text-shadow: 0 1px 4px rgba(0,0,0,.4); }
.watermark svg { width: 48px; height: 44px; }
```
